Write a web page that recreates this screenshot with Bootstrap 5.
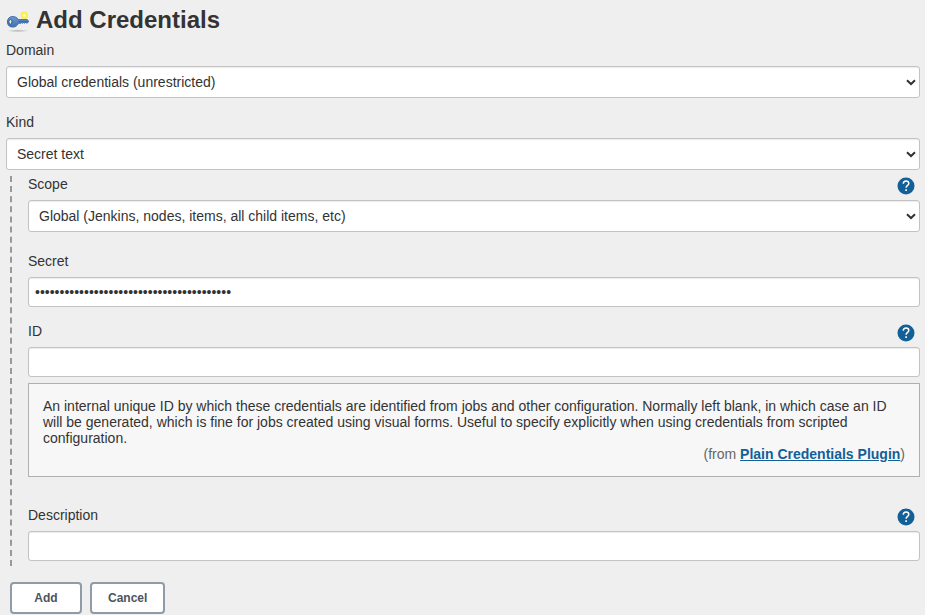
<!DOCTYPE html>
<html lang="en">
<head>
<meta charset="utf-8">
<meta name="viewport" content="width=device-width, initial-scale=1">
<title>Add Credentials</title>
<link href="https://cdn.jsdelivr.net/npm/bootstrap@5.3.0/dist/css/bootstrap.min.css" rel="stylesheet">
<style>
  body {
    background: #efefef;
    color: #333;
    font: 14px/16px "Liberation Sans", Arial, sans-serif;
  }
  .page { padding: 6px 5px 0 6px; }
  .page-title { font-size: 24px; line-height: 28px; font-weight: 700; }
  .form-label { margin-bottom: 8px; }
  .form-control, .form-select {
    height: 30px;
    padding: 0 6px;
    border: 1px solid #c3c3c3;
    border-radius: 3px;
    background-color: #fff;
    box-shadow: inset 0 1px 1px rgba(0, 0, 0, .08);
    color: #333;
    font-size: 14px;
    line-height: 16px;
  }
  .form-select {
    height: 32px;
    padding: 0 24px 0 10px;
    background-image: url("data:image/svg+xml,%3Csvg xmlns='http://www.w3.org/2000/svg' viewBox='0 0 10 7'%3E%3Cpath d='M1 1.2 5 5 9 1.2' fill='none' stroke='%23333' stroke-width='2'/%3E%3C/svg%3E");
    background-size: 10px 7px;
    background-position: right 3px center;
  }
  .kind-settings {
    margin: 6px 0 16px 4px;
    padding: 0 0 5px 16px;
    border-left: 2px dashed #999;
  }
  .help-button {
    width: 18px;
    height: 18px;
    margin: 1px 5px -3px 0;
  }
  .help-text {
    margin-top: 6px;
    padding: 14px;
    border: 1px solid #b0b0b0;
    background: #f7f7f7;
  }
  .help-source { color: #666; }
  .help-source a { color: #135f97; }
  .field-gap { margin-bottom: 21px; }
  .section-gap { margin-bottom: 30px; }
  .action {
    min-width: 72px;
    height: 32px;
    padding: 0 16px;
    border: 2px solid #8f9ba6;
    border-radius: 4px;
    background: #fff;
    color: #4d545d;
    font-size: 12px;
    line-height: 16px;
    font-weight: 700;
  }
</style>
</head>
<body>
<svg class="d-none" aria-hidden="true">
  <symbol id="help" viewBox="0 0 18 18">
    <circle cx="9" cy="9" r="8.5" fill="#135f97"/>
    <path d="M6.3 6.8C6.3 5.1 7.5 4 9.1 4s2.7 1 2.7 2.4c0 2-2.7 2.1-2.7 4.4" fill="none" stroke="#fff" stroke-width="1.5"/>
    <path d="M8.3 12.3h1.6v1.6H8.3z" fill="#fff"/>
  </symbol>
</svg>
<main class="page container-fluid">
  <h1 class="page-title d-flex align-items-center mb-2">
    <svg class="me-1" width="26" height="24" viewBox="0 0 26 24" aria-hidden="true">
      <defs>
        <linearGradient id="blue" x2="0" y2="1"><stop stop-color="#6a98d2"/><stop offset="1" stop-color="#3e70b2"/></linearGradient>
        <radialGradient id="shade"><stop stop-color="#777" stop-opacity=".5"/><stop offset="1" stop-color="#777" stop-opacity="0"/></radialGradient>
      </defs>
      <ellipse cx="12" cy="22.8" rx="11" ry="1.5" fill="url(#shade)"/>
      <circle cx="18.3" cy="7.3" r="3.7" fill="#f9f04b"/>
      <circle cx="18.3" cy="7.3" r="1.5" fill="#fffcbe"/>
      <path d="M6.5 8.5c2.8 0 4.8 1.1 5.7 3.1h8.9l1.6 1.4-1.2 2h-1.3l-.8-.5-.9.7-1-.6-.9.7-1-.6-.9.6h-2.3c-1 2.5-3 3.8-5.7 3.8-3.3 0-5.3-2.2-5.3-5.1 0-3.2 2-5.5 5.1-5.5z" fill="url(#blue)" stroke="#3a659f" stroke-width=".9"/>
      <path d="M12 13.4h9.5" stroke="#31598f" stroke-width=".7"/>
      <ellipse cx="4.4" cy="13.8" rx="1.5" ry="2.3" fill="#eeeedc" stroke="#284775" stroke-width=".8"/>
    </svg>
    Add Credentials
  </h1>
  <form>
    <div class="mb-3">
      <label class="form-label d-block" for="domain">Domain</label>
      <select class="form-select" id="domain"><option>Global credentials (unrestricted)</option></select>
    </div>
    <label class="form-label d-block" for="kind">Kind</label>
    <select class="form-select" id="kind"><option>Secret text</option></select>

    <div class="kind-settings">
      <div class="field-gap">
        <div class="d-flex justify-content-between">
          <label class="form-label" for="scope">Scope</label>
          <button type="button" class="help-button btn d-flex p-0 border-0" aria-label="Help for Scope"><svg width="18" height="18"><use href="#help"/></svg></button>
        </div>
        <select class="form-select" id="scope"><option>Global (Jenkins, nodes, items, all child items, etc)</option></select>
      </div>
      <div class="mb-3">
        <label class="form-label d-block" for="secret">Secret</label>
        <input class="form-control" type="password" id="secret" value="0123456789012345678901234567890123456789" autocomplete="off">
      </div>
      <div class="section-gap">
        <div class="d-flex justify-content-between">
          <label class="form-label" for="cred-id">ID</label>
          <button type="button" class="help-button btn d-flex p-0 border-0" aria-label="Help for ID"><svg width="18" height="18"><use href="#help"/></svg></button>
        </div>
        <input class="form-control" type="text" id="cred-id">
        <div class="help-text">
          <div>An internal unique ID by which these credentials are identified from jobs and other configuration. Normally left blank, in which case an ID will be generated, which is fine for jobs created using visual forms. Useful to specify explicitly when using credentials from scripted configuration.</div>
          <div class="help-source text-end">(from <a class="fw-bold" href="#">Plain Credentials Plugin</a>)</div>
        </div>
      </div>
      <div>
        <div class="d-flex justify-content-between">
          <label class="form-label" for="description">Description</label>
          <button type="button" class="help-button btn d-flex p-0 border-0" aria-label="Help for Description"><svg width="18" height="18"><use href="#help"/></svg></button>
        </div>
        <input class="form-control" type="text" id="description">
      </div>
    </div>

    <div class="d-flex gap-2 ms-1">
      <button type="submit" class="action">Add</button>
      <button type="button" class="action">Cancel</button>
    </div>
  </form>
</main>
<script src="https://cdn.jsdelivr.net/npm/bootstrap@5.3.0/dist/js/bootstrap.bundle.min.js"></script>
</body>
</html>
